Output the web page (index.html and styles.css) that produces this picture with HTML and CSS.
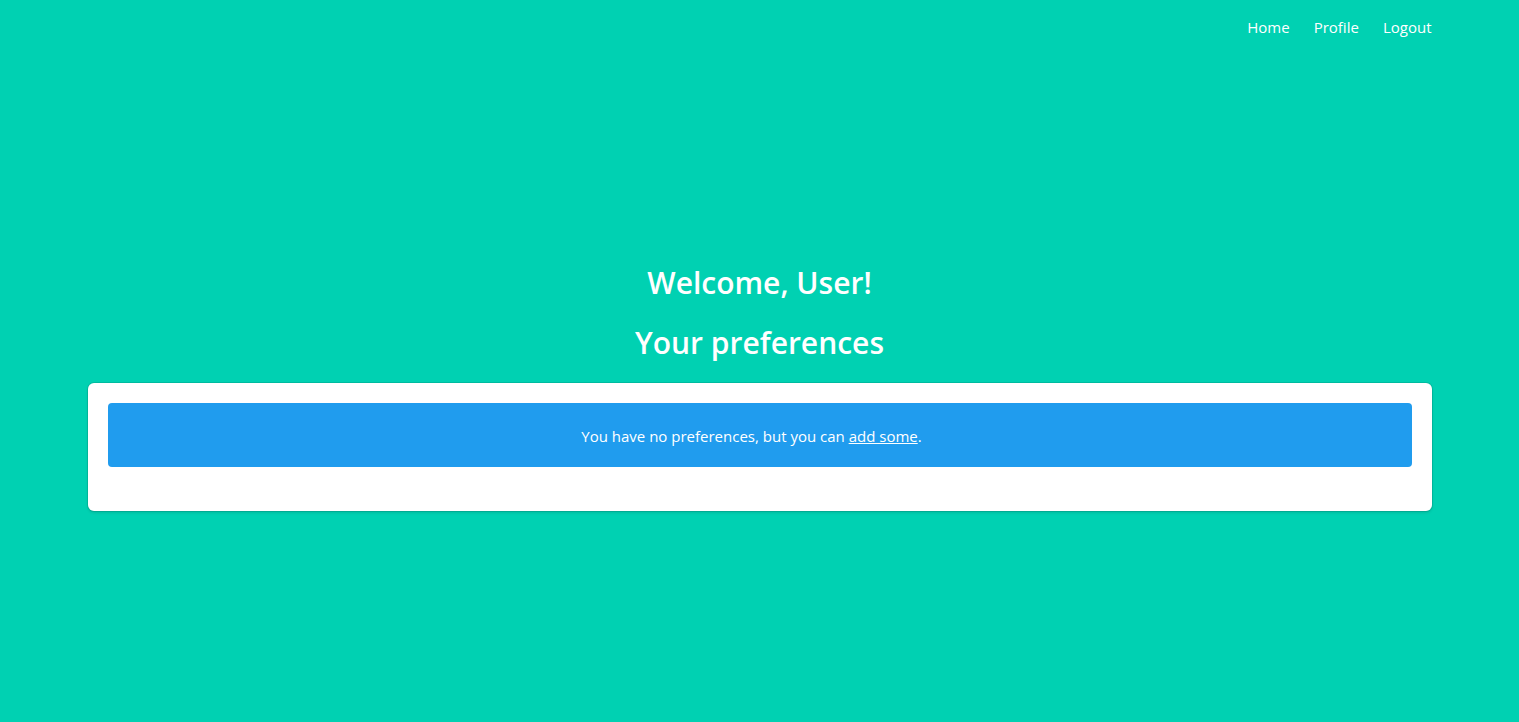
FILE: index.html
```html
<!DOCTYPE html>
<html lang="en">
<head>
<meta charset="utf-8">
<title>Preferences</title>
<link rel="stylesheet" href="styles.css">
</head>
<body>
<section class="hero">
  <header class="hero-head">
    <nav class="navbar">
      <div class="navbar-end">
        <a class="navbar-item" href="#">Home</a>
        <a class="navbar-item" href="#">Profile</a>
        <a class="navbar-item" href="#">Logout</a>
      </div>
    </nav>
  </header>
  <div class="hero-body">
    <div class="container">
      <h1 class="title">Welcome, User!</h1>
      <h2 class="title">Your preferences</h2>
      <div class="box">
        <div class="notification">
          You have no preferences, but you can <a href="#">add some</a>.
        </div>
      </div>
    </div>
  </div>
</section>
</body>
</html>
```
FILE: styles.css
```css
html, body {
  margin: 0;
  padding: 0;
}
body {
  font-family: "Open Sans", "Noto Sans", sans-serif;
  font-size: 15px;
  line-height: 24px;
  color: #4a4a4a;
  background: #00d1b2;
}
.hero {
  min-height: 722px;
  display: flex;
  flex-direction: column;
  background: #00d1b2;
  color: #fff;
}
.hero-head {
  flex: none;
}
.navbar {
  width: 1344px;
  margin: 0 auto;
  height: 52px;
  display: flex;
  justify-content: flex-end;
}
.navbar-end {
  display: flex;
  align-items: stretch;
  margin-right: -12px;
}
.navbar-item {
  display: flex;
  align-items: center;
  padding: 9px 12px 7px;
  color: #fff;
  text-decoration: none;
  font-size: 15px;
}
.hero-body {
  flex: 1 0 auto;
  display: flex;
  align-items: center;
  padding: 48px 24px;
}
.container {
  width: 1344px;
  margin: 0 auto;
  text-align: center;
}
.title {
  margin: 0 0 24px;
  padding-top: 4px;
  font-size: 30px;
  font-weight: 600;
  line-height: 32px;
  color: #fff;
}
.box {
  background: #fff;
  border-radius: 6px;
  box-shadow: 0 2px 3px rgba(10, 10, 10, 0.1), 0 0 0 1px rgba(10, 10, 10, 0.1);
  padding: 20px;
  text-align: left;
}
.notification {
  background: #209cee;
  color: #fff;
  border-radius: 4px;
  padding: 21px 40px 19px 24px;
  margin-bottom: 24px;
  text-align: center;
}
.notification a {
  color: currentColor;
  text-decoration: underline;
}
```
